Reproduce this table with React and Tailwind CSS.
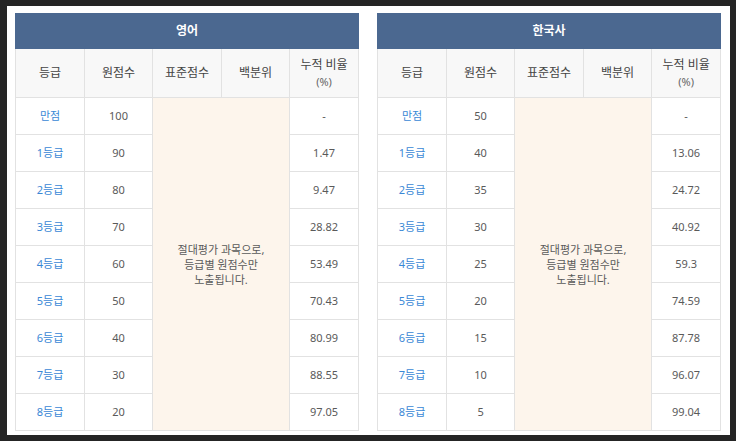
const english = {
  title: "영어",
  rows: [
    ["만점", "100", "-"],
    ["1등급", "90", "1.47"],
    ["2등급", "80", "9.47"],
    ["3등급", "70", "28.82"],
    ["4등급", "60", "53.49"],
    ["5등급", "50", "70.43"],
    ["6등급", "40", "80.99"],
    ["7등급", "30", "88.55"],
    ["8등급", "20", "97.05"],
  ],
};

const history = {
  title: "한국사",
  rows: [
    ["만점", "50", "-"],
    ["1등급", "40", "13.06"],
    ["2등급", "35", "24.72"],
    ["3등급", "30", "40.92"],
    ["4등급", "25", "59.3"],
    ["5등급", "20", "74.59"],
    ["6등급", "15", "87.78"],
    ["7등급", "10", "96.07"],
    ["8등급", "5", "99.04"],
  ],
};

const cell = "border border-[#e2e2e2] text-center align-middle";

function GradeTable({ data }) {
  return (
    <table className="w-[343px] table-fixed border-collapse text-[11px] text-[#5a5a5a]">
      <colgroup>
        <col className="w-[69px]" />
        <col className="w-[68px]" />
        <col className="w-[69px]" />
        <col className="w-[68px]" />
        <col className="w-[69px]" />
      </colgroup>
      <thead>
        <tr className="h-[35px]">
          <th
            colSpan={5}
            className="border border-[#4b6890] bg-[#4b6890] text-[12px] font-bold text-white"
          >
            {data.title}
          </th>
        </tr>
        <tr className="h-[49px] bg-[#f8f8f8] text-[12px] text-[#444]">
          <th className={`${cell} font-normal`}>등급</th>
          <th className={`${cell} font-normal`}>원점수</th>
          <th className={`${cell} font-normal`}>표준점수</th>
          <th className={`${cell} font-normal`}>백분위</th>
          <th className={`${cell} font-normal leading-[17px]`}>
            누적 비율
            <br />
            <span className="text-[11px] text-[#666]">(%)</span>
          </th>
        </tr>
      </thead>
      <tbody>
        {data.rows.map((row, i) => (
          <tr key={row[0]} className="h-[37px]">
            <td className={`${cell} text-[#3a88d6]`}>{row[0]}</td>
            <td className={cell}>{row[1]}</td>
            {i === 0 && (
              <td
                colSpan={2}
                rowSpan={9}
                className={`${cell} bg-[#fdf5ec] leading-[15px]`}
              >
                절대평가 과목으로,
                <br />
                등급별 원점수만
                <br />
                노출됩니다.
              </td>
            )}
            <td className={cell}>{row[2]}</td>
          </tr>
        ))}
      </tbody>
    </table>
  );
}

export default function App() {
  return (
    <div
      className="h-[441px] w-[736px] bg-[#252525] pl-[7px] pt-[6px]"
      style={{ fontFamily: '"Noto Sans", "Noto Sans CJK KR", sans-serif' }}
    >
      <div className="flex h-[429px] w-[723px] items-start gap-[18px] bg-white pl-[8px] pt-[7px]">
        <GradeTable data={english} />
        <GradeTable data={history} />
      </div>
    </div>
  );
}
